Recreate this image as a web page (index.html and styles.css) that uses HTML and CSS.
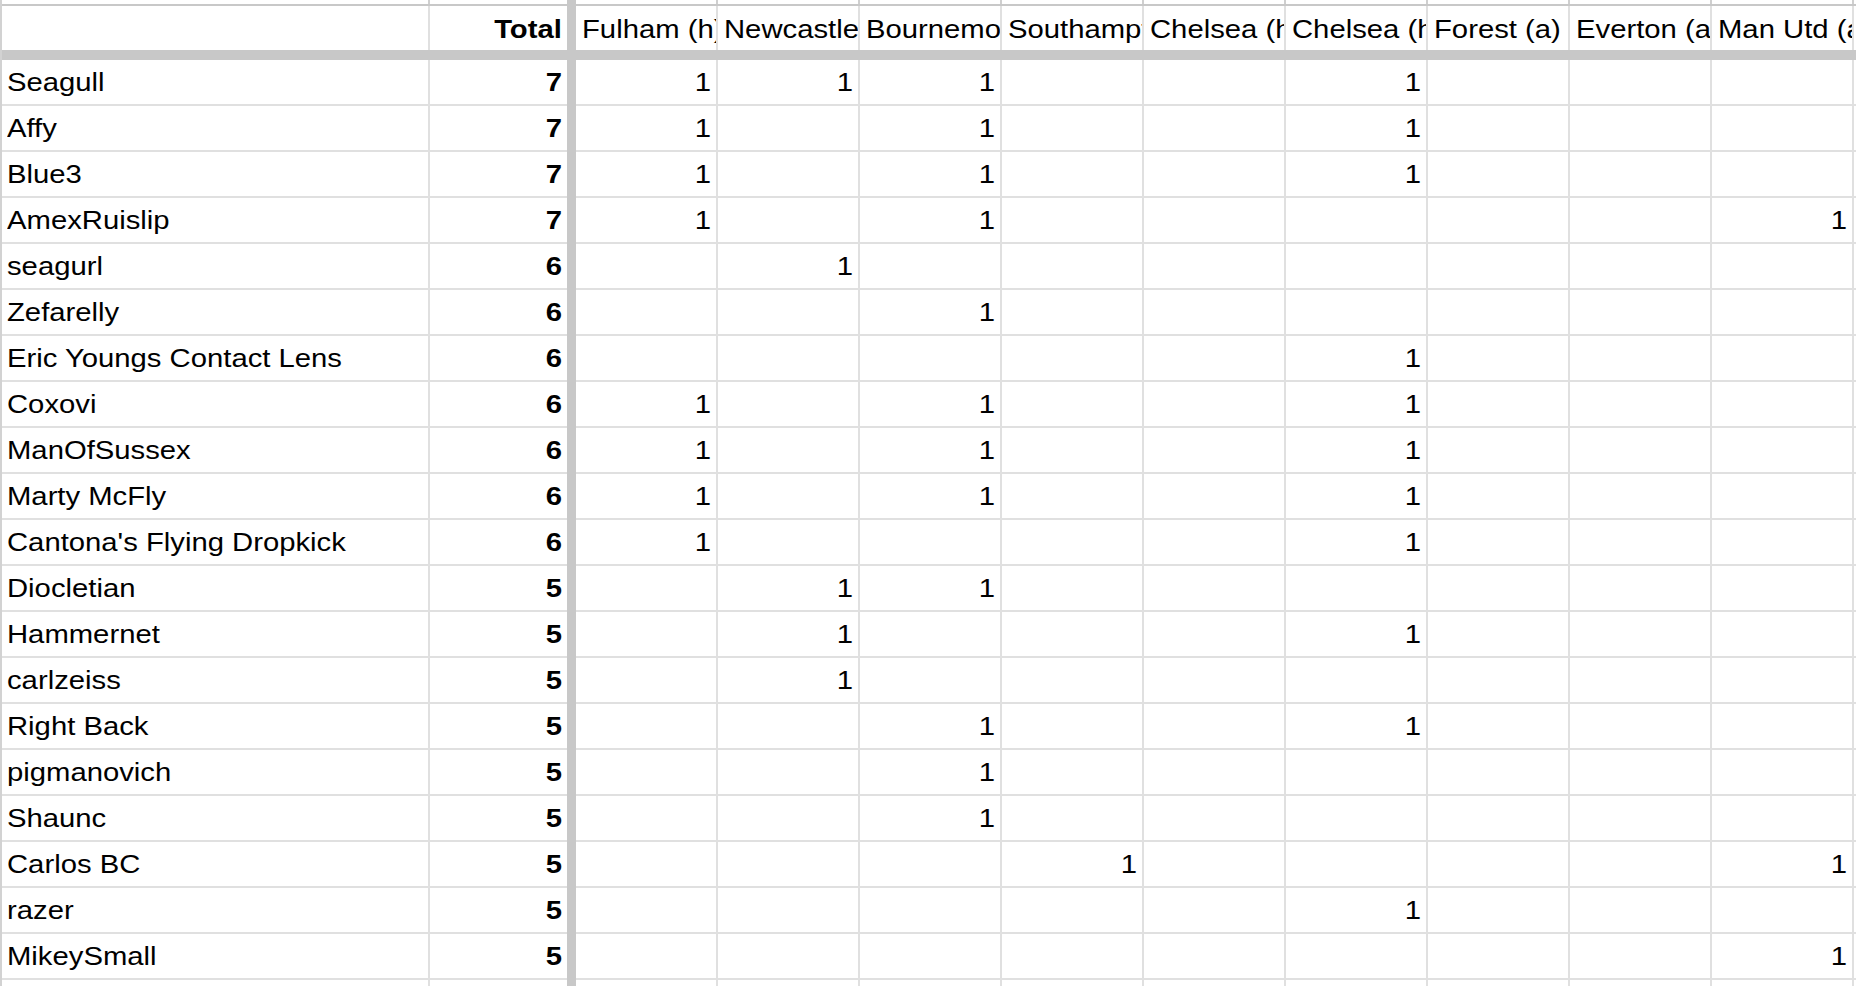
FILE: index.html
```html
<!DOCTYPE html>
<html>
<head>
<meta charset="utf-8">
<link rel="stylesheet" href="styles.css">
</head>
<body>
<div class="sheet">
  <div class="frozen">
    <div class="strip fz"><div class="c"></div><div class="c"></div></div>
    <div class="head fz"><div class="c"></div><div class="c num"><span class="t b">Total</span></div></div>
    <div class="hbar"></div>
    <div class="row fz"><div class="c"><span class="t">Seagull</span></div><div class="c num"><span class="t b">7</span></div></div>
    <div class="row fz"><div class="c"><span class="t">Affy</span></div><div class="c num"><span class="t b">7</span></div></div>
    <div class="row fz"><div class="c"><span class="t">Blue3</span></div><div class="c num"><span class="t b">7</span></div></div>
    <div class="row fz"><div class="c"><span class="t">AmexRuislip</span></div><div class="c num"><span class="t b">7</span></div></div>
    <div class="row fz"><div class="c"><span class="t">seagurl</span></div><div class="c num"><span class="t b">6</span></div></div>
    <div class="row fz"><div class="c"><span class="t">Zefarelly</span></div><div class="c num"><span class="t b">6</span></div></div>
    <div class="row fz"><div class="c"><span class="t">Eric Youngs Contact Lens</span></div><div class="c num"><span class="t b">6</span></div></div>
    <div class="row fz"><div class="c"><span class="t">Coxovi</span></div><div class="c num"><span class="t b">6</span></div></div>
    <div class="row fz"><div class="c"><span class="t">ManOfSussex</span></div><div class="c num"><span class="t b">6</span></div></div>
    <div class="row fz"><div class="c"><span class="t">Marty McFly</span></div><div class="c num"><span class="t b">6</span></div></div>
    <div class="row fz"><div class="c"><span class="t">Cantona's Flying Dropkick</span></div><div class="c num"><span class="t b">6</span></div></div>
    <div class="row fz"><div class="c"><span class="t">Diocletian</span></div><div class="c num"><span class="t b">5</span></div></div>
    <div class="row fz"><div class="c"><span class="t">Hammernet</span></div><div class="c num"><span class="t b">5</span></div></div>
    <div class="row fz"><div class="c"><span class="t">carlzeiss</span></div><div class="c num"><span class="t b">5</span></div></div>
    <div class="row fz"><div class="c"><span class="t">Right Back</span></div><div class="c num"><span class="t b">5</span></div></div>
    <div class="row fz"><div class="c"><span class="t">pigmanovich</span></div><div class="c num"><span class="t b">5</span></div></div>
    <div class="row fz"><div class="c"><span class="t">Shaunc</span></div><div class="c num"><span class="t b">5</span></div></div>
    <div class="row fz"><div class="c"><span class="t">Carlos BC</span></div><div class="c num"><span class="t b">5</span></div></div>
    <div class="row fz"><div class="c"><span class="t">razer</span></div><div class="c num"><span class="t b">5</span></div></div>
    <div class="row fz"><div class="c"><span class="t">MikeySmall</span></div><div class="c num"><span class="t b">5</span></div></div>
    <div class="row fz"><div class="c"></div><div class="c"></div></div>
  </div>
  <div class="vbar"></div>
  <div class="scroll">
    <div class="strip sc"><div class="c"></div><div class="c"></div><div class="c"></div><div class="c"></div><div class="c"></div><div class="c"></div><div class="c"></div><div class="c"></div><div class="c"></div><div class="c"></div></div>
    <div class="head sc">
      <div class="c"><span class="t">Fulham (h)</span></div>
      <div class="c"><span class="t">Newcastle (a)</span></div>
      <div class="c"><span class="t">Bournemouth (h)</span></div>
      <div class="c"><span class="t">Southampton (a)</span></div>
      <div class="c"><span class="t">Chelsea (h)</span></div>
      <div class="c"><span class="t">Chelsea (h)</span></div>
      <div class="c"><span class="t">Forest (a)</span></div>
      <div class="c"><span class="t">Everton (a)</span></div>
      <div class="c"><span class="t">Man Utd (a)</span></div>
      <div class="c"></div>
    </div>
    <div class="hbar"></div>
    <!-- 1 Seagull -->
    <div class="row sc"><div class="c num"><span class="t">1</span></div><div class="c num"><span class="t">1</span></div><div class="c num"><span class="t">1</span></div><div class="c"></div><div class="c"></div><div class="c num"><span class="t">1</span></div><div class="c"></div><div class="c"></div><div class="c"></div><div class="c"></div></div>
    <!-- 2 Affy -->
    <div class="row sc"><div class="c num"><span class="t">1</span></div><div class="c"></div><div class="c num"><span class="t">1</span></div><div class="c"></div><div class="c"></div><div class="c num"><span class="t">1</span></div><div class="c"></div><div class="c"></div><div class="c"></div><div class="c"></div></div>
    <!-- 3 Blue3 -->
    <div class="row sc"><div class="c num"><span class="t">1</span></div><div class="c"></div><div class="c num"><span class="t">1</span></div><div class="c"></div><div class="c"></div><div class="c num"><span class="t">1</span></div><div class="c"></div><div class="c"></div><div class="c"></div><div class="c"></div></div>
    <!-- 4 AmexRuislip -->
    <div class="row sc"><div class="c num"><span class="t">1</span></div><div class="c"></div><div class="c num"><span class="t">1</span></div><div class="c"></div><div class="c"></div><div class="c"></div><div class="c"></div><div class="c"></div><div class="c num"><span class="t">1</span></div><div class="c"></div></div>
    <!-- 5 seagurl -->
    <div class="row sc"><div class="c"></div><div class="c num"><span class="t">1</span></div><div class="c"></div><div class="c"></div><div class="c"></div><div class="c"></div><div class="c"></div><div class="c"></div><div class="c"></div><div class="c"></div></div>
    <!-- 6 Zefarelly -->
    <div class="row sc"><div class="c"></div><div class="c"></div><div class="c num"><span class="t">1</span></div><div class="c"></div><div class="c"></div><div class="c"></div><div class="c"></div><div class="c"></div><div class="c"></div><div class="c"></div></div>
    <!-- 7 Eric -->
    <div class="row sc"><div class="c"></div><div class="c"></div><div class="c"></div><div class="c"></div><div class="c"></div><div class="c num"><span class="t">1</span></div><div class="c"></div><div class="c"></div><div class="c"></div><div class="c"></div></div>
    <!-- 8 Coxovi -->
    <div class="row sc"><div class="c num"><span class="t">1</span></div><div class="c"></div><div class="c num"><span class="t">1</span></div><div class="c"></div><div class="c"></div><div class="c num"><span class="t">1</span></div><div class="c"></div><div class="c"></div><div class="c"></div><div class="c"></div></div>
    <!-- 9 ManOfSussex -->
    <div class="row sc"><div class="c num"><span class="t">1</span></div><div class="c"></div><div class="c num"><span class="t">1</span></div><div class="c"></div><div class="c"></div><div class="c num"><span class="t">1</span></div><div class="c"></div><div class="c"></div><div class="c"></div><div class="c"></div></div>
    <!-- 10 Marty -->
    <div class="row sc"><div class="c num"><span class="t">1</span></div><div class="c"></div><div class="c num"><span class="t">1</span></div><div class="c"></div><div class="c"></div><div class="c num"><span class="t">1</span></div><div class="c"></div><div class="c"></div><div class="c"></div><div class="c"></div></div>
    <!-- 11 Cantona -->
    <div class="row sc"><div class="c num"><span class="t">1</span></div><div class="c"></div><div class="c"></div><div class="c"></div><div class="c"></div><div class="c num"><span class="t">1</span></div><div class="c"></div><div class="c"></div><div class="c"></div><div class="c"></div></div>
    <!-- 12 Diocletian -->
    <div class="row sc"><div class="c"></div><div class="c num"><span class="t">1</span></div><div class="c num"><span class="t">1</span></div><div class="c"></div><div class="c"></div><div class="c"></div><div class="c"></div><div class="c"></div><div class="c"></div><div class="c"></div></div>
    <!-- 13 Hammernet -->
    <div class="row sc"><div class="c"></div><div class="c num"><span class="t">1</span></div><div class="c"></div><div class="c"></div><div class="c"></div><div class="c num"><span class="t">1</span></div><div class="c"></div><div class="c"></div><div class="c"></div><div class="c"></div></div>
    <!-- 14 carlzeiss -->
    <div class="row sc"><div class="c"></div><div class="c num"><span class="t">1</span></div><div class="c"></div><div class="c"></div><div class="c"></div><div class="c"></div><div class="c"></div><div class="c"></div><div class="c"></div><div class="c"></div></div>
    <!-- 15 Right Back -->
    <div class="row sc"><div class="c"></div><div class="c"></div><div class="c num"><span class="t">1</span></div><div class="c"></div><div class="c"></div><div class="c num"><span class="t">1</span></div><div class="c"></div><div class="c"></div><div class="c"></div><div class="c"></div></div>
    <!-- 16 pigmanovich -->
    <div class="row sc"><div class="c"></div><div class="c"></div><div class="c num"><span class="t">1</span></div><div class="c"></div><div class="c"></div><div class="c"></div><div class="c"></div><div class="c"></div><div class="c"></div><div class="c"></div></div>
    <!-- 17 Shaunc -->
    <div class="row sc"><div class="c"></div><div class="c"></div><div class="c num"><span class="t">1</span></div><div class="c"></div><div class="c"></div><div class="c"></div><div class="c"></div><div class="c"></div><div class="c"></div><div class="c"></div></div>
    <!-- 18 Carlos BC -->
    <div class="row sc"><div class="c"></div><div class="c"></div><div class="c"></div><div class="c num"><span class="t">1</span></div><div class="c"></div><div class="c"></div><div class="c"></div><div class="c"></div><div class="c num"><span class="t">1</span></div><div class="c"></div></div>
    <!-- 19 razer -->
    <div class="row sc"><div class="c"></div><div class="c"></div><div class="c"></div><div class="c"></div><div class="c"></div><div class="c num"><span class="t">1</span></div><div class="c"></div><div class="c"></div><div class="c"></div><div class="c"></div></div>
    <!-- 20 MikeySmall -->
    <div class="row sc"><div class="c"></div><div class="c"></div><div class="c"></div><div class="c"></div><div class="c"></div><div class="c"></div><div class="c"></div><div class="c"></div><div class="c num"><span class="t">1</span></div><div class="c"></div></div>
    <div class="row sc"><div class="c"></div><div class="c"></div><div class="c"></div><div class="c"></div><div class="c"></div><div class="c"></div><div class="c"></div><div class="c"></div><div class="c"></div><div class="c"></div></div>
  </div>
</div>
</body>
</html>
```

FILE: styles.css
```css
html, body {
  margin: 0;
  padding: 0;
  background: #ffffff;
  overflow: hidden;
}

body {
  font-family: "Liberation Sans", Arial, Helvetica, sans-serif;
  font-size: 25px;
  color: #000000;
}

.sheet {
  display: flex;
  align-items: flex-start;
  border-left: 2px solid #d2d2d2;
  height: 986px;
  overflow: hidden;
}

.frozen {
  width: 565px;
  flex: none;
}

.vbar {
  width: 9px;
  flex: none;
  align-self: stretch;
  background: #c8c8c8;
}

.scroll {
  flex: 1;
  min-width: 0;
}

.fz {
  display: grid;
  grid-template-columns: 428px 137px;
}

.sc {
  display: grid;
  grid-template-columns: repeat(9, 142px) 1fr;
}

.strip {
  height: 6px;
  box-sizing: border-box;
  border-bottom: 2px solid #c8c8c8;
}

.strip .c {
  border-right-color: #cfcfcf;
}

.head {
  height: 44px;
}

.head .c {
  height: 44px;
  line-height: 47px;
}

.hbar {
  height: 10px;
  background: #c8c8c8;
}

.row {
  height: 46px;
  box-sizing: border-box;
  border-bottom: 2px solid #e0e0e0;
}

.c {
  box-sizing: border-box;
  border-right: 2px solid #e0e0e0;
  overflow: hidden;
  white-space: nowrap;
  line-height: 44px;
  padding: 0 5px;
  text-align: left;
}

.fz .c:last-child {
  border-right: none;
}

.head.sc .c {
  padding: 0 6px;
}

.num {
  text-align: right;
  padding: 0 5px;
}

.t {
  display: inline-block;
  transform: scaleX(1.17);
  transform-origin: left center;
}

.num .t {
  transform-origin: right center;
}

.b {
  font-weight: bold;
}
```
